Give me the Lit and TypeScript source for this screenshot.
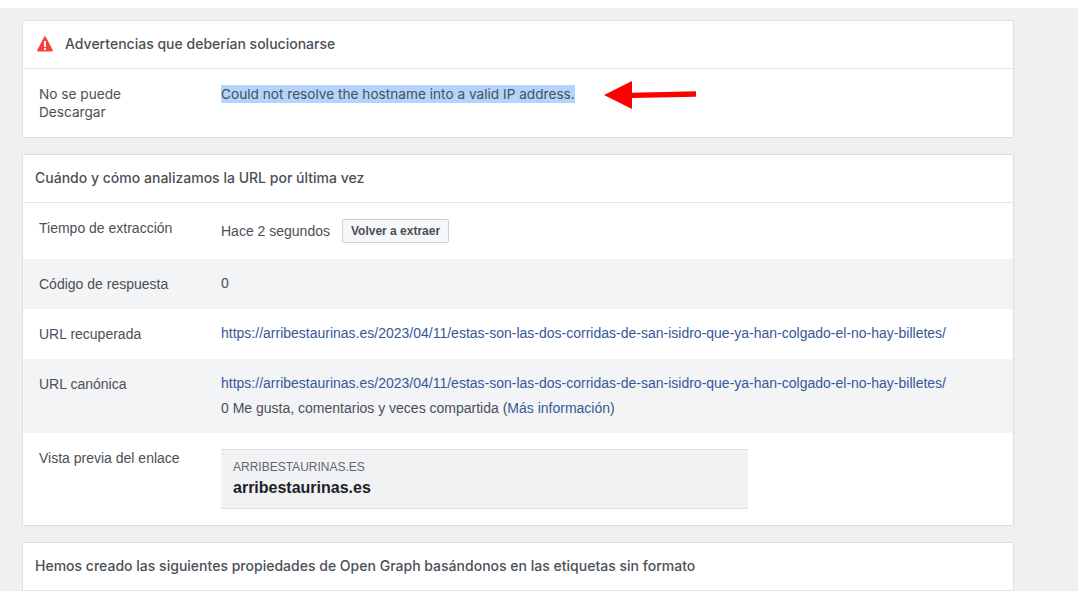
import { LitElement, html, css } from "lit";
import { customElement } from "lit/decorators.js";

@customElement("app-root")
export class AppRoot extends LitElement {
  static styles = css`
    :host { display: block; width: 1078px; height: 591px; overflow: hidden; background: #fff; font-family: Inter, "Liberation Sans", sans-serif; color: #4b4f56; position: relative; }
    .panel { margin-top: 8px; height: 583px; background: #f0f0f0; padding: 12px 64px 0 22px; box-sizing: border-box; overflow: hidden; display: flex; flex-direction: column; gap: 16px; }
    .card { background: #fff; border: 1px solid #dddfe2; flex: none; }
    .head { border-bottom: 1px solid #e5e6e9; display: flex; align-items: center; padding: 0 0 2px 12px; font-size: 14px; font-weight: 500; letter-spacing: 0.01px; color: #4b4f56; box-sizing: border-box; height: 48px; }
    .head.warn { padding-left: 14px; gap: 12px; }
    .head svg { display: block; }
    .row { display: grid; grid-template-columns: 182px 1fr; padding: 0 16px; font-size: 13.65px; line-height: 18px; box-sizing: border-box; }
    .row.alt { background: #f3f4f6; }
    .sel { display: inline-block; background: #b3d4fd; }
    .sans { font-family: "Liberation Sans", sans-serif; font-size: 14px; }
    .val { margin-top: -1px; }
    .r0 { height: 68px; padding-top: 16px; }
    .r1 { height: 56px; padding-top: 16px; align-items: start; }
    .r2 { height: 50px; padding-top: 16px; }
    .r3 { height: 74px; padding-top: 16px; }
    .r4 { height: 92px; padding-top: 16px; }
    .inline { display: flex; align-items: center; gap: 12px; }
    button { font: bold 12px "Liberation Sans", sans-serif; color: #4b4f56; background: #f6f7f9; border: 1px solid #ced0d4; border-radius: 2px; height: 24px; padding: 0 8px; }
    a { color: #365899; text-decoration: none; }
    .sub { margin-top: 7px; }
    .preview { width: 527px; height: 60px; box-sizing: border-box; background: #f1f2f4; border-top: 1px solid #dddfe2; border-bottom: 1px solid #dddfe2; padding: 9px 12px; }
    .dom { font-size: 12px; line-height: 16px; color: #606770; }
    .title { font-size: 16px; line-height: 20px; margin-top: 3px; font-weight: 600; color: #1d2129; }
    .arrow { position: absolute; left: 600px; top: 76px; }
  `;

  render() {
    return html`
      <div class="panel">
        <section class="card">
          <div class="head warn">
            <svg width="16" height="16" viewBox="0 0 16 16"><path d="M8 .3c.4 0 .7.2.9.6l6.900 13.300c.3.6-.1 1.300-.8 1.300H1c-.7 0-1.100-.7-.8-1.300L7.100.9c.2-.4.5-.6.9-.6z" fill="#fa3e3e"/><rect x="7" y="5" width="2" height="6" fill="#fff"/><rect x="7" y="12" width="2" height="2" fill="#fff"/></svg>
            <span>Advertencias que deberían solucionarse</span>
          </div>
          <div class="row r0">
            <div>No se puede<br />Descargar</div>
            <div><span class="sel">Could not resolve the hostname into a valid IP address.</span></div>
          </div>
        </section>
        <section class="card">
          <div class="head">Cuándo y cómo analizamos la URL por última vez</div>
          <div class="row r1 sans">
            <div>Tiempo de extracción</div>
            <div class="inline">Hace 2 segundos <button>Volver a extraer</button></div>
          </div>
          <div class="row r2 alt sans"><div>Código de respuesta</div><div class="val">0</div></div>
          <div class="row r2 sans"><div>URL recuperada</div><div class="val"><a>https://arribestaurinas.es/2023/04/11/estas-son-las-dos-corridas-de-san-isidro-que-ya-han-colgado-el-no-hay-billetes/</a></div></div>
          <div class="row r3 alt sans">
            <div>URL canónica</div>
            <div class="val">
              <a>https://arribestaurinas.es/2023/04/11/estas-son-las-dos-corridas-de-san-isidro-que-ya-han-colgado-el-no-hay-billetes/</a>
              <div class="sub">0 Me gusta, comentarios y veces compartida (<a>Más información</a>)</div>
            </div>
          </div>
          <div class="row r4 sans">
            <div>Vista previa del enlace</div>
            <div class="preview">
              <div class="dom">ARRIBESTAURINAS.ES</div>
              <div class="title">arribestaurinas.es</div>
            </div>
          </div>
        </section>
        <section class="card">
          <div class="head">Hemos creado las siguientes propiedades de Open Graph basándonos en las etiquetas sin formato</div>
        </section>
      </div>
      <svg class="arrow" width="100" height="36" viewBox="0 0 100 36"><path d="M4 19 32 5v11.700l64-1.400v5.400l-64 1.400V33z" fill="#fe0000"/></svg>
    `;
  }
}
